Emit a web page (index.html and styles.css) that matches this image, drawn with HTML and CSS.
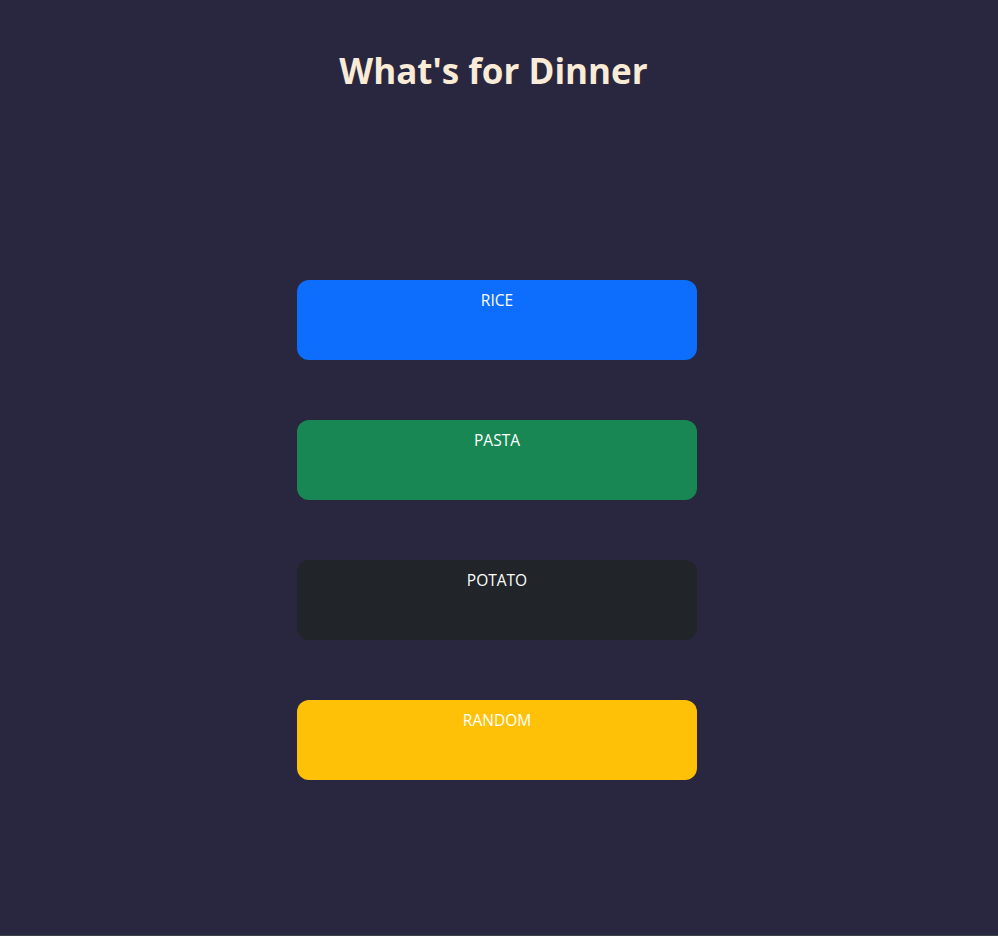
FILE: index.html
```html
<!DOCTYPE html>
<html lang="en">
<head>
<meta charset="utf-8">
<title>What's for Dinner</title>
<link rel="stylesheet" href="styles.css">
</head>
<body>
<main class="page">
  <h1 class="title">What's for Dinner</h1>
  <div class="choices">
    <button class="choice choice-rice">RICE</button>
    <button class="choice choice-pasta">PASTA</button>
    <button class="choice choice-potato">POTATO</button>
    <button class="choice choice-random">RANDOM</button>
  </div>
</main>
</body>
</html>
```

FILE: styles.css
```css
html, body {
  margin: 0;
  padding: 0;
}
body {
  background: #28273f;
  min-height: 935px;
  border-bottom: 1px solid #3b4245;
  font-family: "Open Sans", "Noto Sans", sans-serif;
}
.page {
  display: flex;
  flex-direction: column;
  align-items: center;
  padding: 47px 4px 0 0;
}
.title {
  margin: 0 7px 0 0;
  color: #faebd7;
  font-family: "Open Sans", sans-serif;
  font-weight: 700;
  font-size: 35px;
  line-height: 48px;
}
.choices {
  margin-top: 185px;
  display: flex;
  flex-direction: column;
  gap: 60px;
}
.choice {
  width: 400px;
  height: 80px;
  border: none;
  border-radius: 12px;
  color: #ffffff;
  font-family: "Open Sans", sans-serif;
  font-size: 15.5px;
  line-height: 24px;
  padding: 8px 0 0;
  display: flex;
  justify-content: center;
  align-items: flex-start;
  cursor: pointer;
}
.choice-rice { background: #0d6efd; }
.choice-pasta { background: #198754; }
.choice-potato { background: #212529; }
.choice-random { background: #ffc107; }
```
